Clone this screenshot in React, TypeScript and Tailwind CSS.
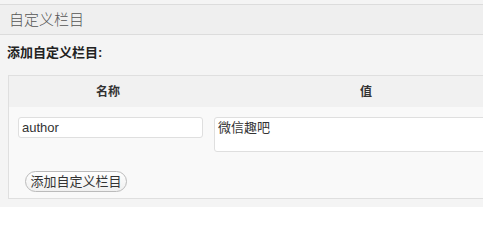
import React from "react";

export default function App() {
  const cjk = { fontFamily: '"Liberation Sans", "Noto Sans CJK SC", sans-serif' };
  return (
    <div className="w-[483px] h-[207px] overflow-hidden bg-[#f4f4f4] pt-[4px]" style={cjk}>
      <div className="h-[31px] border-t border-b border-[#dcdcdc] bg-[#efefef] pl-[9px] flex items-center text-[15px] font-light text-[#555] leading-none">
        自定义栏目
      </div>
      <div className="pl-[7px] pt-[10px] h-[40px] text-[13px] font-bold text-[#222] leading-[16px]">
        添加自定义栏目:
      </div>
      <div className="ml-[8px] w-[540px] h-[124px] border border-[#dfdfdf] bg-[#f9f9f9]">
        <div className="flex h-[31px] bg-[#f1f1f1] items-center text-[12px] font-bold text-[#333]">
          <div className="w-[198px] text-center">名称</div>
          <div className="flex-1 text-center pr-[22px]">值</div>
        </div>
        <div className="flex pt-[10px] pl-[9px]">
          <input
            readOnly
            value="author"
            className="w-[185px] h-[21px] border border-[#dfdfdf] rounded-[3px] bg-white px-[3px] text-[13px] text-[#333] outline-none"
            style={{ fontFamily: '"Liberation Sans", sans-serif' }}
          />
          <textarea
            readOnly
            value="微信趣吧"
            className="ml-[11px] w-[320px] h-[35px] border border-[#dfdfdf] rounded-[3px] bg-white px-[3px] py-[2px] text-[13px] text-[#333] resize-none outline-none leading-[16px]"
            style={cjk}
          />
        </div>
        <div className="pl-[16px] pt-[17px]">
          <button className="w-[102px] h-[21px] rounded-full border border-[#bbb] bg-gradient-to-b from-[#fefefe] to-[#f0f0f0] text-[13px] text-[#333] leading-none">
            添加自定义栏目
          </button>
        </div>
      </div>
    </div>
  );
}
